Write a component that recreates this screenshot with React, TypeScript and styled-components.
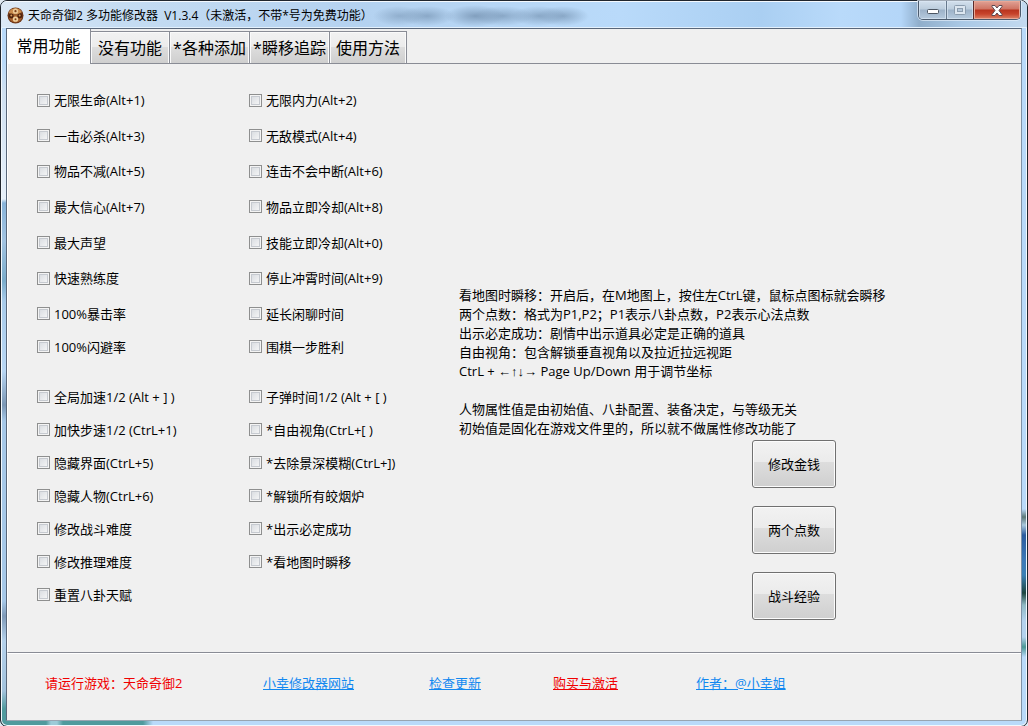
import React from "react";
import styled, { createGlobalStyle } from "styled-components";

const GlobalStyle = createGlobalStyle`
  * { box-sizing: border-box; }
  body {
    margin: 0;
    background: #dfe9f2;
    color: #000;
    font: 13px/18px "Open Sans", "Liberation Sans", "Noto Sans CJK SC", sans-serif;
  }
`;

const Window = styled.div`
  display: flex;
  flex-direction: column;
  min-height: 100vh;
  padding: 0 5px 5px;
  border: 1px solid #20262e;
  border-radius: 7px;
  box-shadow: inset 0 0 0 1px #f2f8fd;
  background:
    linear-gradient(90deg, #4f9a9d 0 45px, #9ccbd8 50px 56px, #4f9a9d 62px 142px, transparent 152px) 0 100% / 100% 6px no-repeat,
    linear-gradient(180deg, transparent 0 508px, #5c7877 516px, #a9c9dd 524px, #2c5c9e 534px, #3d7ab8 560px, #3b80b5 574px, #1d4540 592px, #8fb9c4 604px, #b4d2ee 620px, #b4d2ee 636px, #4b9795 646px, transparent 656px) 100% 0 / 6px 100% no-repeat,
    linear-gradient(180deg, transparent 0 60px, #cfe0f1 90px, #e6f0fa 198px, #88b4da 202px, #a3c4e2 240px, #7aaccb 280px, #a8cbea 300px, #b9d7f4 370px, #7b97b5 404px, #a6c8e8 420px, #a6c8e8 600px, #7f9ab8 615px, #b5d2ec 640px, #a2c2dc 690px, #4f9a9d 708px) 0 0 / 6px 100% no-repeat,
    #b9dafa;
`;

const TitleBar = styled.header`
  display: flex;
  align-items: flex-start;
  height: 27px;
  margin: 0 -5px;
  padding: 0 6px;
  border-radius: 6px 6px 0 0;
  background:
    radial-gradient(ellipse 26px 10px at 398px 15px, #7f9dbcaa, transparent),
    radial-gradient(ellipse 28px 10px at 426px 15px, #7f9dbccc, transparent),
    radial-gradient(ellipse 30px 11px at 474px 15px, #7592b1cc, transparent),
    radial-gradient(ellipse 30px 10px at 502px 15px, #7f9dbccc, transparent),
    radial-gradient(ellipse 28px 10px at 538px 15px, #7f9dbccc, transparent),
    radial-gradient(ellipse 26px 10px at 562px 15px, #7f9dbccc, transparent),
    linear-gradient(180deg, #f4f9fe 0 1px, transparent 1px 26px, #e4f1fd 26px),
    linear-gradient(90deg, #dce9f6 0, #c5dcf2 120px, #b4d2f0 360px, #b9dafa 620px, #aacff2 760px, #b9dafa 840px, #b4d6f8 900px, #90aecb 918px, #a9c8e5 960px, #c3daf0);
`;

const AppIcon = styled.svg`
  flex: none;
  width: 17px;
  height: 17px;
  margin-top: 6px;
`;

const Title = styled.h1`
  flex: 1;
  margin: 5px 0 0 4px;
  font-size: 12px;
  line-height: 20px;
  font-weight: 400;
  white-space: pre;
`;

const Controls = styled.div`
  display: flex;
  height: 19px;
  border: 1px solid #4c5b6d;
  border-top: 0;
  border-radius: 0 0 5px 5px;
  box-shadow: 0 0 0 1px #e4effaaa;
  overflow: hidden;
`;

const ControlButton = styled.button<{ $close?: boolean }>`
  display: flex;
  align-items: center;
  justify-content: center;
  width: ${(p) => (p.$close ? "47px" : "27px")};
  padding: 0;
  border: 0;
  border-left: 1px solid ${(p) => (p.$close ? "#5a2a2a" : "#66788c")};
  box-shadow: inset 0 0 0 1px ${(p) => (p.$close ? "#e9a795" : "#dce9f5aa")};
  background: ${(p) =>
    p.$close
      ? "linear-gradient(180deg, #e0a296 0, #cf7463 8px, #b8341f 9px, #c7442c 13px, #dd8468 100%)"
      : "linear-gradient(180deg, #d3e0ed 0, #bccddd 8px, #9db2c8 9px, #b6cade 100%)"};

  &:first-child { border-left: 0; }
`;

const Client = styled.main`
  display: flex;
  flex: 1;
  flex-direction: column;
  border: 1px solid #59677a;
  border-bottom-color: #98a5b1;
  border-right-color: #7f93a8;
  background: #f0f0f0;
`;

const TabBar = styled.nav`
  display: grid;
  grid-template-columns: 84px 79px 80px 80px 77px;
  align-items: end;
  height: 35px;
  border-bottom: 1px solid #898c95;
`;

const Tab = styled.button<{ $active?: boolean }>`
  height: ${(p) => (p.$active ? "35px" : "32px")};
  margin-bottom: ${(p) => (p.$active ? "-1px" : "0")};
  padding: ${(p) => (p.$active ? "0 0 2px" : "0")};
  border: 1px solid #898c95;
  border-width: ${(p) => (p.$active ? "0 1px 0 0" : "1px 1px 0 0")};
  box-shadow: ${(p) => (p.$active ? "none" : "inset 1px 1px 0 #fafafa, inset -1px 0 0 #fafafa")};
  background: ${(p) =>
    p.$active ? "#fff" : "linear-gradient(180deg, #f2f2f2 0, #ebebeb 50%, #dddddd 50%, #cfcfcf 100%)"};
  color: #000;
  font: inherit;
  font-size: 16px;
  line-height: 24px;
  white-space: nowrap;
`;

const Panel = styled.section`
  display: flex;
  flex: 1;
  align-items: flex-start;
  padding: 27px 0 32px 29px;
  border-left: 1px solid #fff;
  border-bottom: 1px solid #898c95;
`;

const Options = styled.form`
  display: grid;
  grid-template-columns: 212px 210px;
`;

const OptionColumn = styled.div`
  display: flex;
  flex-direction: column;
`;

const OptionGroup = styled.div`
  display: grid;
  grid-auto-rows: 33px;

  &:first-child {
    grid-auto-rows: 18px;
    align-content: space-between;
    height: 232px;
    margin-bottom: 7px;
  }

  &:last-child { margin-top: 17px; }
`;

const Option = styled.label`
  display: flex;
  align-items: center;
  gap: 4px;
  white-space: pre;
`;

const Checkbox = styled.input.attrs({ type: "checkbox" })`
  appearance: none;
  flex: none;
  width: 13px;
  height: 13px;
  margin: 0;
  border: 1px solid #8e8f8f;
  box-shadow: inset 0 0 0 1px #f4f4f4, inset 0 0 0 2px #c6cad0;
  background: linear-gradient(135deg, #d4d8dd, #fafafa);
`;

const Side = styled.div`
  flex: 1;
  padding-top: 195px;
`;

const Note = styled.p`
  margin: 0;
  line-height: 19px;
  white-space: pre;
`;

const Actions = styled.div`
  display: grid;
  gap: 18px;
  width: 84px;
  margin: 2px 0 0 293px;
`;

const ActionButton = styled.button`
  height: 48px;
  padding: 0;
  border: 1px solid #707070;
  border-radius: 3px;
  box-shadow: inset 0 0 0 1px #fcfcfc;
  background: linear-gradient(180deg, #f2f2f2 0, #ebebeb 46%, #dddddd 46%, #cfcfcf 100%);
  color: #000;
  font: inherit;
`;

const Footer = styled.footer`
  display: grid;
  grid-template-columns: 218px 166px 124px 143px auto;
  align-items: center;
  height: 67px;
  padding: 0 0 9px 38px;
  border-top: 1px solid #fff;
`;

const Status = styled.span`
  color: #f00000;
`;

const FooterLink = styled.a<{ $alert?: boolean }>`
  justify-self: start;
  color: ${(p) => (p.$alert ? "#f00000" : "#1288f0")};
  text-decoration: underline;
`;

const columns = [
  [
    ["无限生命(Alt+1)", "一击必杀(Alt+3)", "物品不减(Alt+5)", "最大信心(Alt+7)", "最大声望", "快速熟练度", "100%暴击率"],
    ["100%闪避率"],
    ["全局加速1/2 (Alt + ] )", "加快步速1/2 (CtrL+1)", "隐藏界面(CtrL+5)", "隐藏人物(CtrL+6)", "修改战斗难度", "修改推理难度", "重置八卦天赋"],
  ],
  [
    ["无限内力(Alt+2)", "无敌模式(Alt+4)", "连击不会中断(Alt+6)", "物品立即冷却(Alt+8)", "技能立即冷却(Alt+0)", "停止冲霄时间(Alt+9)", "延长闲聊时间"],
    ["围棋一步胜利"],
    ["子弹时间1/2 (Alt + [ )", "*自由视角(CtrL+[ )", "*去除景深模糊(CtrL+])", "*解锁所有皎烟炉", "*出示必定成功", "*看地图时瞬移"],
  ],
];

const note = `看地图时瞬移：开启后，在M地图上，按住左CtrL键，鼠标点图标就会瞬移
两个点数：格式为P1,P2；P1表示八卦点数，P2表示心法点数
出示必定成功：剧情中出示道具必定是正确的道具
自由视角：包含解锁垂直视角以及拉近拉远视距
CtrL + ←↑↓→ Page Up/Down 用于调节坐标

人物属性值是由初始值、八卦配置、装备决定，与等级无关
初始值是固化在游戏文件里的，所以就不做属性修改功能了`;

const tabs = ["常用功能", "没有功能", "*各种添加", "*瞬移追踪", "使用方法"];
const actions = ["修改金钱", "两个点数", "战斗经验"];

export default function App() {
  return (
    <>
      <GlobalStyle />
      <Window>
        <TitleBar>
          <AppIcon viewBox="0 0 17 17" aria-hidden="true">
            <circle cx="8.5" cy="8.5" r="8" fill="#6b3517" />
            <path d="M1.500 6A7.500 7.500 0 0 1 15 5L11 7.500H6z" fill="#c98a4c" />
            <path d="M2 11a7 7 0 0 0 13 0l-4-3H6z" fill="#a8632f" />
            <circle cx="8.500" cy="4.200" r="2.600" fill="#ecc995" />
            <circle cx="8.500" cy="4.200" r="1.100" fill="#7a3d1a" />
            <circle cx="4.300" cy="9" r="2.400" fill="#4d210c" />
            <circle cx="12.700" cy="9" r="2.400" fill="#4d210c" />
            <circle cx="4.300" cy="8.600" r="1" fill="#d49a5c" />
            <circle cx="12.700" cy="8.600" r="1" fill="#d49a5c" />
            <circle cx="8.500" cy="12.200" r="2.600" fill="#f0d2a0" />
            <circle cx="8.500" cy="12.200" r="1" fill="#7a3d1a" />
          </AppIcon>
          <Title>天命奇御2 多功能修改器  V1.3.4（未激活，不带*号为免费功能）</Title>
          <Controls>
            <ControlButton aria-label="最小化">
              <svg width="12" height="10" viewBox="0 0 12 10">
                <rect x="0.500" y="4.500" width="11" height="4" rx="1" fill="#fff" stroke="#4c5663" />
              </svg>
            </ControlButton>
            <ControlButton aria-label="最大化" disabled>
              <svg width="12" height="10" viewBox="0 0 12 10">
                <rect x="0.500" y="0.500" width="11" height="9" rx="1" fill="#dce6f0" stroke="#8b9cae" />
                <rect x="3.500" y="3.500" width="5" height="3" fill="#b6c8da" stroke="#8b9cae" />
              </svg>
            </ControlButton>
            <ControlButton $close aria-label="关闭">
              <svg width="12" height="11" viewBox="0 0 12 11">
                <path
                  d="M1 .5h3l2 2.500 2-2.500h3v1L8 5.500l3 4v1H8L6 8l-2 2.500H1v-1l3-4-3-4z"
                  fill="#fff"
                  stroke="#5b4a52"
                />
              </svg>
            </ControlButton>
          </Controls>
        </TitleBar>
        <Client>
          <TabBar>
            {tabs.map((name, i) => (
              <Tab key={name} $active={i === 0}>{name}</Tab>
            ))}
          </TabBar>
          <Panel>
            <Options>
              {columns.map((groups, c) => (
                <OptionColumn key={c}>
                  {groups.map((names, g) => (
                    <OptionGroup key={g}>
                      {names.map((name) => (
                        <Option key={name}>
                          <Checkbox />
                          {name}
                        </Option>
                      ))}
                    </OptionGroup>
                  ))}
                </OptionColumn>
              ))}
            </Options>
            <Side>
              <Note>{note}</Note>
              <Actions>
                {actions.map((name) => (
                  <ActionButton key={name}>{name}</ActionButton>
                ))}
              </Actions>
            </Side>
          </Panel>
          <Footer>
            <Status>请运行游戏：天命奇御2</Status>
            <FooterLink href="#site">小幸修改器网站</FooterLink>
            <FooterLink href="#update">检查更新</FooterLink>
            <FooterLink href="#buy" $alert>购买与激活</FooterLink>
            <FooterLink href="#author">作者：@小幸姐</FooterLink>
          </Footer>
        </Client>
      </Window>
    </>
  );
}
